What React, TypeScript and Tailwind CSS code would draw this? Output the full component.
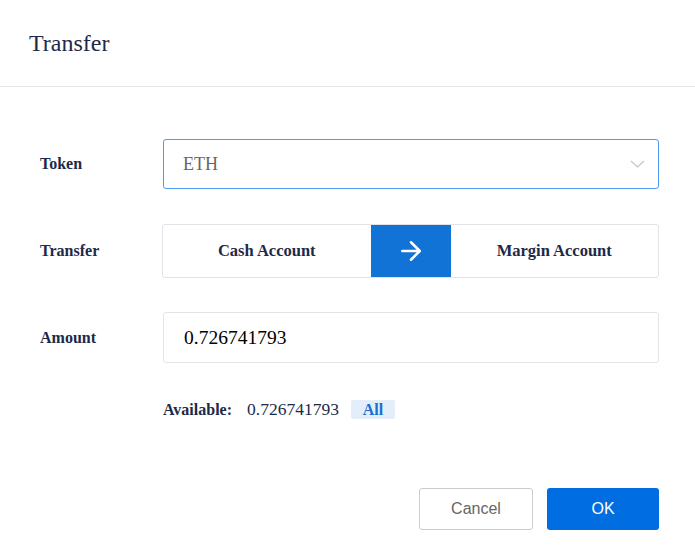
import { ArrowRight } from "lucide-react";

export default function App() {
  return (
    <div className="w-[695px] h-[556px] bg-white font-['Liberation_Serif',serif] text-[#1c2a4a]">
      {/* Header */}
      <div className="h-[87px] border-b border-[#e6e6e6] flex items-center pl-[29px]">
        <h1 className="text-[24px] leading-none">Transfer</h1>
      </div>

      <div className="pt-[52px] pl-[40px] pr-[36px]">
        {/* Token */}
        <div className="flex items-center">
          <div className="w-[123px] text-[16px] font-bold">Token</div>
          <div className="flex-1 h-[50px] border border-[#4a9cf2] rounded-[3px] pl-[19px] pr-[13px] flex items-center justify-between">
            <span className="text-[18px] text-[#666]">ETH</span>
            <svg width="15" height="8" viewBox="0 0 15 8" fill="none">
              <polyline points="1,1 7.5,7 14,1" stroke="#c0c4cc" strokeWidth="1.2" />
            </svg>
          </div>
        </div>

        {/* Transfer */}
        <div className="flex items-center mt-[35px]">
          <div className="w-[122px] text-[16px] font-bold">Transfer</div>
          <div className="flex-1 h-[54px] border border-[#e1e3e8] rounded-[3px] flex">
            <div className="flex-1 flex items-center justify-center text-[16.5px] font-bold">
              Cash Account
            </div>
            <div className="w-[80px] bg-[#1173d6] flex items-center justify-center">
              <ArrowRight size={30} strokeWidth={2} className="text-white" />
            </div>
            <div className="flex-1 flex items-center justify-center text-[16.5px] font-bold">
              Margin Account
            </div>
          </div>
        </div>

        {/* Amount */}
        <div className="flex items-center mt-[34px]">
          <div className="w-[123px] text-[16px] font-bold">Amount</div>
          <div className="flex-1 h-[51px] border border-[#e2e4e8] rounded-[3px] pl-[20px] flex items-center">
            <span className="text-[19.5px] text-black">0.726741793</span>
          </div>
        </div>

        {/* Available */}
        <div className="flex items-center mt-[37px] ml-[123px] h-[19px]">
          <span className="text-[16px] font-bold">Available:</span>
          <span className="text-[17.5px] ml-[15px]">0.726741793</span>
          <span className="ml-[12px] w-[44px] h-[19px] rounded-[2px] bg-[#e3eefa] text-[#1a6fd0] text-[16px] font-bold flex items-center justify-center">
            All
          </span>
        </div>

        {/* Buttons */}
        <div className="flex justify-end gap-[14px] mt-[69px]">
          <button className="w-[114px] h-[42px] border border-[#cccccc] rounded-[3px] bg-white text-[#666] text-[16px] font-['Liberation_Sans',sans-serif]">
            Cancel
          </button>
          <button className="w-[112px] h-[42px] rounded-[3px] bg-[#006de1] text-white text-[16px] font-['Liberation_Sans',sans-serif]">
            OK
          </button>
        </div>
      </div>
    </div>
  );
}
